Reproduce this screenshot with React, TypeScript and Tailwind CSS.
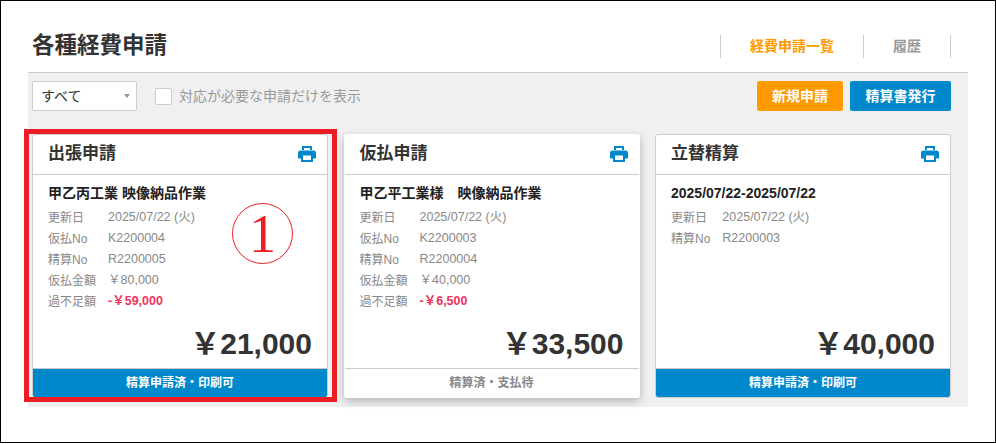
const FONT = "font-['Liberation_Sans','Noto_Sans_CJK_JP',sans-serif]";

type Row = { label: string; value: string; alert?: boolean };

type Slip = {
  title: string;
  name: string;
  rows: Row[];
  amount: string;
  status: string;
  done: boolean;
};

const SLIPS: Slip[] = [
  {
    title: '出張申請',
    name: '甲乙丙工業 映像納品作業',
    rows: [
      { label: '更新日', value: '2025/07/22 (火)' },
      { label: '仮払No', value: 'K2200004' },
      { label: '精算No', value: 'R2200005' },
      { label: '仮払金額', value: '￥80,000' },
      { label: '過不足額', value: '-￥59,000', alert: true },
    ],
    amount: '￥21,000',
    status: '精算申請済・印刷可',
    done: true,
  },
  {
    title: '仮払申請',
    name: '甲乙平工業様　映像納品作業',
    rows: [
      { label: '更新日', value: '2025/07/22 (火)' },
      { label: '仮払No', value: 'K2200003' },
      { label: '精算No', value: 'R2200004' },
      { label: '仮払金額', value: '￥40,000' },
      { label: '過不足額', value: '-￥6,500', alert: true },
    ],
    amount: '￥33,500',
    status: '精算済・支払待',
    done: false,
  },
  {
    title: '立替精算',
    name: '2025/07/22-2025/07/22',
    rows: [
      { label: '更新日', value: '2025/07/22 (火)' },
      { label: '精算No', value: 'R2200003' },
    ],
    amount: '￥40,000',
    status: '精算申請済・印刷可',
    done: true,
  },
];

function PrintIcon() {
  return (
    <svg viewBox="0 0 18 18" className="h-[18px] w-[18px] fill-[#0088cc]">
      <path d="M4 1h10v4h-2V3H6v2H4z" />
      <path d="M2.5 5.5h13A2.5 2.5 0 0 1 18 8v5.5h-3V17H3v-3.500H0V8a2.500 2.500 0 0 1 2.500-2.500zM5 10.500V15h8v-4.500z" />
    </svg>
  );
}

function SlipCard({ slip, raised }: { slip: Slip; raised?: boolean }) {
  return (
    <div
      className={`flex h-[264px] w-[296px] flex-col overflow-hidden rounded-[3px] border border-[#cccccc] bg-white ${
        raised ? 'border-transparent shadow-[0_3px_8px_rgba(0,0,0,0.25)]' : ''
      }`}
    >
      <div className="flex h-[40px] shrink-0 items-center justify-between border-b border-[#cccccc] pb-[2px] pl-[15px] pr-[11px]">
        <span className="text-[17px] font-bold text-[#333333]">{slip.title}</span>
        <PrintIcon />
      </div>
      <div className="flex flex-1 flex-col pl-[15px] pr-[15px] pt-[8px]">
        <div className="text-[14px] font-bold leading-[20px] text-[#222222]">{slip.name}</div>
        <div className="mt-[4px] grid auto-rows-[21px] grid-cols-[auto_1fr] items-center gap-x-[12px] text-[12px] text-[#888888]">
          {slip.rows.map((row) => (
            <div key={row.label} className="contents">
              <span>{row.label}</span>
              <span className={`text-[12.5px] ${row.alert ? 'font-bold text-[#f0325f]' : ''}`}>{row.value}</span>
            </div>
          ))}
        </div>
        <div className="mt-auto pb-[6px] text-right text-[30px] font-bold leading-[36px] text-[#333333]">
          {slip.amount}
        </div>
      </div>
      <div
        className={`flex h-[29px] shrink-0 items-center justify-center border-t border-[#cccccc] text-[12px] font-bold ${
          slip.done ? 'bg-[#0088cc] text-white' : 'bg-white text-[#888888]'
        }`}
      >
        {slip.status}
      </div>
    </div>
  );
}

export default function App() {
  return (
    <div className={`relative h-[443px] w-[996px] border border-black bg-white ${FONT}`}>
      <div className="ml-[27px] w-[940px]">
        <header className="flex h-[71px] items-start justify-between">
          <h1 className="ml-[4px] mt-[30px] text-[22.5px] font-bold leading-[30px] text-[#333333]">各種経費申請</h1>
          <nav className="mr-[17px] mt-[34px] flex h-[23px] items-center border-r border-[#cccccc] text-[14px] font-bold">
            <a className="flex h-full w-[143px] items-center justify-center border-l border-[#cccccc] text-[#ff9900]">
              経費申請一覧
            </a>
            <a className="flex h-full w-[87px] items-center justify-center border-l border-[#cccccc] text-[#999999]">
              履歴
            </a>
          </nav>
        </header>
        <main className="h-[335px] border-t border-[#cccccc] bg-[#f0f0f0] pl-[4px] pr-[17px] pt-[8px]">
          <div className="flex h-[30px] items-center">
            <div className="flex h-[30px] w-[105px] items-center justify-between rounded-[2px] border border-[#cccccc] bg-white pl-[8px] pr-[6px] text-[14px] text-[#333333]">
              すべて
              <span className="h-0 w-0 border-x-[3.5px] border-t-[4px] border-x-transparent border-t-[#999999]" />
            </div>
            <span className="ml-[18px] h-[17px] w-[17px] rounded-[2px] border border-[#cccccc] bg-white" />
            <span className="ml-[7px] text-[14px] text-[#999999]">対応が必要な申請だけを表示</span>
            <button className="ml-auto h-[30px] w-[86px] rounded-[2px] bg-[#ff9900] text-[14px] font-bold text-white">
              新規申請
            </button>
            <button className="ml-[7px] h-[30px] w-[101px] rounded-[2px] bg-[#0088cc] text-[14px] font-bold text-white">
              精算書発行
            </button>
          </div>
          <div className="mt-[23px] flex justify-between">
            {SLIPS.map((slip, i) => (
              <SlipCard key={slip.title} slip={slip} raised={i === 1} />
            ))}
          </div>
        </main>
      </div>

      {/* Red annotation over the first card */}
      <div className="absolute left-[23px] top-[128px] h-[273px] w-[313px] border-[5px] border-[#ee1c25]" />
      <div className="absolute left-[231px] top-[202px] flex h-[61px] w-[61px] items-center justify-center rounded-full border-[1.5px] border-[#ee1c25] font-['Liberation_Serif',serif] text-[54px] leading-none text-[#ee1c25]">
        1
      </div>
    </div>
  );
}
